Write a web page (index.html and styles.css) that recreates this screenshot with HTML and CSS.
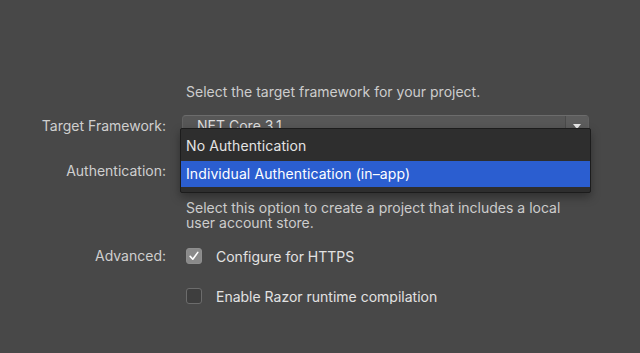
FILE: index.html
```html
<!DOCTYPE html>
<html lang="en">

<head>
    <meta charset="UTF-8">
    <meta name="viewport" content="width=device-width, initial-scale=1.0">
    <title>Configure your new ASP.NET Core Web Application</title>
    <link rel="stylesheet" href="styles.css">
</head>

<body>
    <div class="form">
        <div class="label"></div>
        <div class="hint intro">Select the target framework for your project.</div>

        <div class="label framework-label">Target Framework:</div>
        <div class="combo framework">
            <span class="combo-value">.NET Core 3.1</span>
            <span class="combo-arrow"></span>
        </div>

        <div class="label auth-label">Authentication:</div>
        <div class="combo auth">
            <!-- El valor queda tapado por el menu abierto -->
            <span class="combo-value"></span>
            <span class="combo-arrow"></span>

            <ul class="menu">
                <li>No Authentication</li>
                <li class="selected">Individual Authentication (in–app)</li>
            </ul>
        </div>

        <div class="label"></div>
        <div class="hint desc">Select this option to create a project that includes a local user account store.</div>

        <div class="label advanced-label">Advanced:</div>
        <label class="check">
            <span class="box checked">
                <svg width="12" height="12" viewBox="0 0 12 12"><path d="M2.2 6.4 L4.8 9.2 L9.8 2.4" fill="none" stroke="#fff" stroke-width="1.6" stroke-linecap="round" stroke-linejoin="round"/></svg>
            </span>
            Configure for HTTPS
        </label>

        <div class="label"></div>
        <label class="check razor">
            <span class="box"></span>
            Enable Razor runtime compilation
        </label>
    </div>
</body>

</html>
```

FILE: styles.css
```css
body {
    margin: 0;
    background-color: #484848;
    font-family: Inter, "Liberation Sans", sans-serif;
    font-size: 14px;
    color: #d8d8d8;
}

.form {
    display: grid;
    grid-template-columns: 166px 407px;
    column-gap: 16px;
    padding-top: 84px;
}

.label {
    text-align: right;
    color: #cfcfcf;
    line-height: 22px;
}

.hint {
    color: #cdcdcd;
    line-height: 16px;
    padding-left: 4px;
}

.intro {
    margin-bottom: 15px;
}

.framework-label {
    height: 22px;
}

.combo {
    position: relative;
    display: flex;
    height: 22px;
    box-sizing: border-box;
    background-color: #575757;
    border: 1px solid #626262;
    border-top-color: #6c6c6c;
    border-radius: 4px;
}

.combo-value {
    flex: 1;
    padding-left: 10px;
    line-height: 20px;
    color: #dcdcdc;
}

.combo-arrow {
    width: 22px;
    border-left: 1px solid #4a4a4a;
    background-color: #5d5d5d;
    border-radius: 0 3px 3px 0;
    position: relative;
}

.combo-arrow::after {
    content: "";
    position: absolute;
    left: 7px;
    top: 8px;
    border-left: 4px solid transparent;
    border-right: 4px solid transparent;
    border-top: 5px solid #e8e8e8;
}

.auth-label,
.auth {
    margin-top: 23px;
}

.menu {
    position: absolute;
    left: -3px;
    top: -33px;
    width: 411px;
    margin: 0;
    padding: 2px 0 5px;
    list-style: none;
    background-color: #2e2e2e;
    border: 1px solid #1c1c1c;
    border-radius: 2px;
    box-shadow: 0 4px 10px rgba(0, 0, 0, 0.35);
    box-sizing: border-box;
}

.menu li {
    padding-left: 5px;
    font-size: 14px;
    letter-spacing: 0.1px;
    color: #e4e4e4;
    line-height: 30px;
}

.menu li.selected {
    background-color: #2b5ed0;
    color: #fff;
    line-height: 26px;
}

.desc {
    margin-top: 18px;
    margin-bottom: 18px;
    width: 385px;
    line-height: 15px;
}

.advanced-label {
    line-height: 16px;
}

.check {
    display: flex;
    align-items: center;
    height: 16px;
    padding-left: 4px;
    color: #e2e2e2;
}

.razor {
    margin-top: 24px;
}

.box {
    width: 16px;
    height: 16px;
    box-sizing: border-box;
    margin-right: 14px;
    border: 1px solid #6c6c6c;
    border-radius: 3px;
    background-color: #3e3e3e;
    display: flex;
    align-items: center;
    justify-content: center;
}

.box.checked {
    background-color: #8a8a8a;
    border-color: #8f8f8f;
}
```
